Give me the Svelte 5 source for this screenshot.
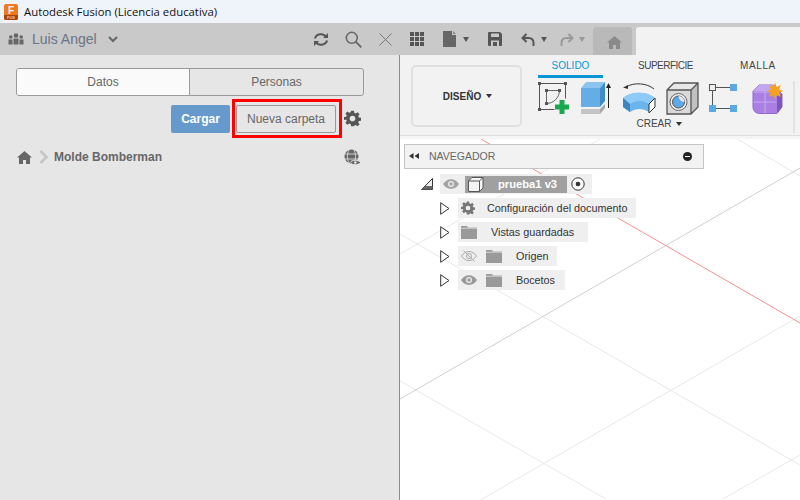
<script>
  const items = [
    { n: 'Configuración del documento', i: 'gear', w: 178, gap: 12 },
    { n: 'Vistas guardadas', i: 'folder', w: 130, gap: 14 },
    { n: 'Origen', i: 'hidden', w: 99, gap: 14 },
    { n: 'Bocetos', i: 'eye', w: 107, gap: 14 }
  ];
</script>

<div class="app">
  <header class="title">
    <svg class="logo" width="16" height="18" viewBox="0 0 16 18"><rect x="1" y="1" width="14" height="16" rx="2" fill="#f0781e"/><path d="M1 12h14v3a2 2 0 0 1-2 2H3a2 2 0 0 1-2-2z" fill="#a8420f"/><text x="8" y="10.5" class="logof">F</text><text x="8" y="15.8" class="logos">FUS</text></svg>
    <span>Autodesk Fusion (Licencia educativa)</span>
  </header>

  <div class="toolbar">
    <div class="user">
      <svg width="16" height="12" viewBox="0 0 16 12" fill="#666"><circle cx="8" cy="2.5" r="2.3"/><circle cx="2.8" cy="4" r="1.8"/><circle cx="13.2" cy="4" r="1.8"/><rect x="5.5" y="5.5" width="5" height="6"/><rect x="0.5" y="6.5" width="4" height="5"/><rect x="11.5" y="6.5" width="4" height="5"/></svg>
      <span class="uname">Luis Angel</span>
      <svg width="10" height="7" viewBox="0 0 10 7" fill="none" stroke="#666" stroke-width="2"><path d="M1 1l4 4 4-4"/></svg>
    </div>
    <div class="tools">
      <svg class="t-sync" width="16" height="15" viewBox="0 0 16 15" fill="none" stroke="#555" stroke-width="2"><path d="M2 6.5a6 5.5 0 0 1 11-1.5M14 8.5a6 5.500 0 0 1-11 1.500"/><path d="M15 1v5h-5zM1 14V9h5z" fill="#555" stroke="none"/></svg>
      <svg class="t-search" width="17" height="17" viewBox="0 0 17 17" fill="none" stroke="#666" stroke-width="1.5"><circle cx="6.800" cy="6.800" r="5.500"/><path d="M10.800 10.800l5.500 5.500" stroke-width="1.800"/></svg>
      <svg class="t-x" width="13" height="13" viewBox="0 0 13 13" fill="none" stroke="#777" stroke-width="1"><path d="M.5 .5l12 12M12.5 .5l-12 12"/></svg>
      <svg class="t-grid" width="14" height="14" viewBox="0 0 14 14" fill="#555"><path d="M0 0h4v4H0zM5 0h4v4H5zM10 0h4v4h-4zM0 5h4v4H0zM5 5h4v4H5zM10 5h4v4h-4zM0 10h4v4H0zM5 10h4v4H5zM10 10h4v4h-4z"/></svg>
      <svg class="t-file" width="13" height="16" viewBox="0 0 13 16"><path d="M0 0h9v4h4v12H0z" fill="#666"/><path d="M10 0l3 3h-3z" fill="#888"/></svg>
      <span class="caret c1"></span>
      <svg class="t-save" width="14" height="14" viewBox="0 0 14 14" fill="#555"><path d="M0 1a1 1 0 0 1 1-1h11l2 2v11a1 1 0 0 1-1 1H1a1 1 0 0 1-1-1z"/><rect x="3" y="1.5" width="8" height="3.500" fill="#c9c9c9"/><path d="M3 14V8.500h8V14h-2V10H5v4z" fill="#c9c9c9"/></svg>
      <svg class="t-undo" width="14" height="13" viewBox="0 0 14 13" fill="none" stroke="#555" stroke-width="2"><path d="M5.500 1L1.500 5l4 4"/><path d="M2 5h6a4.500 4.500 0 0 1 4.500 4.500V13"/></svg>
      <span class="caret c2"></span>
      <svg class="t-redo" width="14" height="13" viewBox="0 0 14 13" fill="none" stroke="#999" stroke-width="2"><path d="M8.500 1l4 4-4 4"/><path d="M12 5H6a4.500 4.500 0 0 0-4.500 4.500V13"/></svg>
      <span class="caret c3"></span>
      <div class="hometab">
        <svg width="15" height="13" viewBox="0 0 15 13" fill="#8a8a8a"><path d="M7.500 0L15 6.500h-2V13H9V9H6v4H2V6.500H0z"/></svg>
      </div>
      <div class="doctab"></div>
    </div>
  </div>

  <div class="main">
    <aside class="left">
      <div class="seg">
        <div class="segb on">Datos</div>
        <div class="segb">Personas</div>
      </div>
      <div class="actions">
        <button class="upload">Cargar</button>
        <div class="redbox"><button class="newf">Nueva carpeta</button></div>
        <svg class="gear" width="17" height="17" viewBox="0 0 24 24" fill="#555"><path fill-rule="evenodd" d="M10 1h4l.6 3.200 1.900.8 2.700-1.900 2.800 2.800-1.900 2.700.8 1.900 3.100.5v4l-3.100.6-.8 1.900 1.900 2.700-2.800 2.800-2.700-1.900-1.900.8L14 23h-4l-.6-3.200-1.900-.8-2.700 1.900-2.800-2.800 1.900-2.700-.8-1.900L0 14v-4l3.100-.5.800-1.900L2 4.900l2.800-2.800L7.500 4l1.900-.8zM12 8a4 4 0 1 0 0 8 4 4 0 0 0 0-8z"/></svg>
      </div>
      <div class="crumb">
        <svg class="chome" width="15" height="13" viewBox="0 0 15 13" fill="#666"><path d="M7.500 0L15 6.500h-2V13H9V9H6v4H2V6.500H0z"/></svg>
        <svg class="sep" width="9" height="14" viewBox="0 0 9 14" fill="none" stroke="#c4c4c4" stroke-width="2.500"><path d="M1.500 1l6 6-6 6"/></svg>
        <b>Molde Bomberman</b>
        <svg class="globe" width="17" height="17" viewBox="0 0 17 17"><circle cx="7.500" cy="7.500" r="7" fill="#666"/><path d="M0.500 5h14M0.500 10h14M5 1c-2 4-2 9 0 13M10 1c2 4 2 9 0 13" fill="none" stroke="#e6e6e6" stroke-width="0.800"/><path d="M6 13.500c2-3 8.500-3 10.500 0-2 3-8.500 3-10.500 0z" fill="#666" stroke="#e6e6e6"/><circle cx="11.300" cy="13.500" r="1.300" fill="#e6e6e6"/></svg>
      </div>
    </aside>

    <section class="right">
      <div class="ribbon">
        <div class="design"><span>DISEÑO</span><i class="caret dark"></i></div>
        <div class="tabsarea">
          <div class="tabs">
            <div class="tab active">SOLIDO</div>
            <div class="tab sup">SUPERFICIE</div>
            <div class="tab malla">MALLA</div>
          </div>
          <div class="icons">
            <svg class="i1" width="32" height="32" viewBox="0 0 32 32">
              <path d="M1.500 1.500h26M1.500 1.500v26M27.500 1.500v15M1.500 27.500h15" fill="none" stroke="#555"/>
              <path d="M8.500 8.500h13M8.500 8.500v13M21.500 8.500c0 7-6 13-13 13" fill="none" stroke="#666"/>
              <g fill="#555"><rect width="3" height="3"/><rect x="26" width="3" height="3"/><rect y="26" width="3" height="3"/><rect x="7" y="7" width="3" height="3"/><rect x="20" y="7" width="3" height="3"/><rect x="7" y="20" width="3" height="3"/></g>
              <path d="M21.500 18h5v4.500H31v5h-4.500V32h-5v-4.500H17v-5h4.500z" fill="#1aa84f"/>
            </svg>
            <svg class="i2" width="31" height="32" viewBox="0 0 31 32">
              <path d="M0 6L5 0h19l-5 6z" fill="#8cc4f0"/>
              <rect y="6" width="19" height="19" fill="#67ade5"/>
              <path d="M19 6l5-6v19l-5 6z" fill="#3c8cc8"/>
              <path d="M0 27h19v5H0z" fill="#c4c4c4"/>
              <path d="M19 27l5-5v4l-5 6z" fill="#a8a8a8"/>
              <path d="M27.500 26V4" stroke="#222"/>
              <path d="M25 6l2.500-5L30 6z" fill="#222"/>
            </svg>
            <svg class="i3" width="33" height="30" viewBox="0 0 33 30">
              <path d="M3 4C11 -1 24 0 31 6" fill="none" stroke="#333"/>
              <path d="M0 4.500l5-2.500v4z" fill="#333"/>
              <path d="M0 15c8-7 24-7 32 0v8l-6 6c-6-4-13-4-19 0l-7-5z" fill="#6cb4ec"/>
              <path d="M0 15c8-7 24-7 32 0l-6 6c-6-4-13-4-19 0z" fill="#8fcbf8"/>
              <path d="M0 15l7 6v8l-7-5z" fill="#3a85c4"/>
              <path d="M26 21l6-6v9l-6 6z" fill="#fff" stroke="#333"/>
            </svg>
            <svg class="i4" width="33" height="33" viewBox="0 0 33 33">
              <path d="M1 8L8 1h24v24l-7 7H1z" fill="#dadada"/>
              <path d="M1 8L8 1h24l-7 7z" fill="#e8e8e8"/>
              <path d="M25 8l7-7v24l-7 7z" fill="#c0c0c0"/>
              <path d="M1 8L8 1h24v24l-7 7H1zM1 8h24v24M25 8l7-7" fill="none" stroke="#555" stroke-width="1.300"/>
              <circle cx="12.500" cy="20" r="8.500" fill="#eee" stroke="#666"/>
              <circle cx="12.500" cy="20" r="6" fill="#5fa9e6" stroke="#555"/>
              <path d="M12.500 14a6 6 0 0 1 6 6c-3 0-6-3-6-6z" fill="#e8e8e8"/>
            </svg>
            <svg class="i5" width="28" height="28" viewBox="0 0 28 28"><rect x=".5" y=".5" width="6" height="6" fill="#eee" stroke="#555"/><rect x="21" y="0" width="7" height="7" fill="#5aa9e2"/><rect x="0" y="21" width="7" height="7" fill="#5aa9e2"/><rect x="21" y="21" width="7" height="7" fill="#5aa9e2"/><path d="M7 3.500h14M3.500 7v14M7 24.500h14" stroke="#555"/></svg>
            <svg class="i6" width="32" height="32" viewBox="0 0 32 32">
              <path d="M7 3h14l9 9v13l-5 6.500H8C4 31.500 1 29 1 25V9z" fill="#a97fe3" stroke="#8f66d2"/>
              <path d="M1 9L7 3h14l4 6z" fill="#c2a6f0"/>
              <path d="M25 14l5-2v13l-5 6z" fill="#7f55bf"/>
              <path d="M1.500 20h23M13 10v21M1.500 10h23" stroke="#c9adf0" fill="none"/>
              <path d="M23 .5l1.600 4.600 4.400-2-2 4.400 4.500 1.500-4.500 1.600 2 4.400-4.400-2-1.600 4.500-1.600-4.500-4.400 2 2-4.400-4.500-1.600 4.500-1.500-2-4.400 4.400 2z" fill="#f5a21b"/>
            </svg>
          </div>
          <div class="crear">CREAR<i class="caret dark"></i></div>
        </div>
        <div class="rsep"></div>
      </div>
      <div class="shade"></div>

      <div class="canvas">
        <svg class="lines" width="400" height="361" viewBox="400 139 400 361" fill="none">
          <path d="M400 254L600 139M400 234L800 465M737 139L800 176M400 381L606 499M800 316L470 506M800 455L723 499" stroke="#e8e8e8"/>
          <path d="M400 399L800 168" stroke="#cfcfcf"/>
          <path d="M481 139L800 323" stroke="#f59090"/>
        </svg>
        <div class="nav">
          <div class="navhead">
            <svg width="10" height="6" viewBox="0 0 10 6" fill="#333"><path d="M4.500 0v6L0 3zM10 0v6L5.500 3z"/></svg>
            <span>NAVEGADOR</span>
            <i class="minus"></i>
          </div>
          <div class="tree">
            <div class="row root">
              <svg class="tri" width="12" height="12" viewBox="0 0 12 12"><path d="M.5 11.500L11.500 .5v11z" fill="#eee" stroke="#333"/><path d="M4 8h7.500v3.500H.5z" fill="#666"/></svg>
              <div class="chip rootchip">
                <svg class="eye" width="16" height="10" viewBox="0 0 16 10"><path d="M0 5c4-6.500 12-6.500 16 0-4 6.500-12 6.500-16 0z" fill="#a3a3a3"/><circle cx="8" cy="5" r="3" fill="#efefef"/><circle cx="8" cy="5" r="1.800" fill="#a3a3a3"/></svg>
                <div class="docname">
                  <svg width="16" height="15" viewBox="0 0 16 15"><path d="M.5 4L4 .5h11V11l-3.500 3.500H.5z" fill="#f4f4f4" stroke="#555"/><path d="M.5 4H11.500v10.500M11.500 4L15 .5" fill="none" stroke="#555"/></svg>
                  <b>prueba1 v3</b>
                </div>
                <svg class="radio" width="14" height="14" viewBox="0 0 14 14"><circle cx="7" cy="7" r="6.200" fill="#fff" stroke="#333"/><circle cx="7" cy="7" r="2.300" fill="#333"/></svg>
              </div>
            </div>
            {#each items as it}
              <div class="row child">
                <svg class="tri" width="10" height="13" viewBox="0 0 10 13"><path d="M.7 .7L9 6.500.7 12.300z" fill="#fff" stroke="#333"/></svg>
                <div class="chip" style="width:{it.w}px">
                  {#if it.i === 'gear'}
                    <svg width="14" height="14" viewBox="0 0 24 24" fill="#777"><path fill-rule="evenodd" d="M10 1h4l.6 3.200 1.900.8 2.700-1.900 2.800 2.800-1.900 2.700.8 1.900 3.100.5v4l-3.100.6-.8 1.900 1.900 2.700-2.800 2.800-2.700-1.900-1.900.8L14 23h-4l-.6-3.200-1.900-.8-2.700 1.900-2.800-2.800 1.900-2.700-.8-1.900L0 14v-4l3.100-.5.800-1.900L2 4.900l2.800-2.800L7.500 4l1.900-.8zM12 8a4 4 0 1 0 0 8 4 4 0 0 0 0-8z"/></svg>
                  {:else}
                    {#if it.i === 'eye'}
                      <svg class="e2" width="16" height="10" viewBox="0 0 16 10"><path d="M0 5c4-6.500 12-6.500 16 0-4 6.500-12 6.500-16 0z" fill="#999"/><circle cx="8" cy="5" r="3" fill="#efefef"/><circle cx="8" cy="5" r="1.800" fill="#999"/></svg>
                    {:else if it.i === 'hidden'}
                      <svg class="e2" width="16" height="12" viewBox="0 0 16 12" fill="none" stroke="#aaa"><path d="M.5 6c4-6 11-6 15 0-4 6-11 6-15 0z"/><circle cx="8" cy="6" r="2.500"/><path d="M2.500 .5l11 11"/></svg>
                    {/if}
                    <svg class="folder" width="16" height="13" viewBox="0 0 16 13" fill="#9a9a9a"><path d="M0 0h6l1 1.500h9V13H0z"/><path d="M0 2.200h16" stroke="#efefef" stroke-width=".7"/></svg>
                  {/if}
                  <span style="margin-left:{it.gap}px">{it.n}</span>
                </div>
              </div>
            {/each}
          </div>
        </div>
      </div>
    </section>
  </div>
</div>

<style>
  :global(body) { margin: 0; }
  .app { width: 800px; height: 500px; display: flex; flex-direction: column; overflow: hidden; font-family: "Liberation Sans", Arial, sans-serif; background: #fff; }
  .title { height: 23px; flex: none; background: #eff4fb; display: flex; align-items: center; gap: 5px; padding-left: 3px; font: 11.35px "Open Sans", "Noto Sans", sans-serif; color: #111; }
  .logo { flex: none; }
  .logof { fill: #fff; font: bold 10px "Liberation Sans", sans-serif; text-anchor: middle; }
  .logos { fill: #f3c9a8; font: bold 4px "Liberation Sans", sans-serif; text-anchor: middle; }
  .toolbar { height: 32px; flex: none; background: #c9c9c9; display: flex; align-items: center; position: relative; }
  .user { display: flex; align-items: center; margin-left: 8px; width: 304px; }
  .uname { font-size: 14px; color: #6a7585; margin-left: 8px; margin-right: 11px; }
  .tools { display: flex; align-items: center; height: 100%; flex: 1; }
  .t-sync { margin-left: 1px; }
  .t-search { margin-left: 16px; }
  .t-x { margin-left: 17px; }
  .t-grid { margin-left: 18px; }
  .t-file { margin-left: 19px; }
  .caret { display: inline-block; width: 0; height: 0; border-left: 3.5px solid transparent; border-right: 3.5px solid transparent; border-top: 5px solid #555; }
  .c1 { margin-left: 7px; }
  .t-save { margin-left: 19px; }
  .t-undo { margin-left: 19px; }
  .c2 { margin-left: 6px; }
  .t-redo { margin-left: 13px; }
  .c3 { margin-left: 5px; border-top-color: #999; }
  .hometab { margin-left: 8px; width: 39px; height: 28px; align-self: flex-end; background: #b9b9b9; border-radius: 3px 3px 0 0; display: flex; align-items: center; justify-content: center; padding: 3px 0 0 3px; box-sizing: border-box; }
  .doctab { margin-left: 4px; flex: 1; height: 28px; align-self: flex-end; background: #f2f2f2; border-radius: 3px 0 0 0; }
  .main { flex: 1; display: flex; min-height: 0; }
  .left { width: 399px; flex: none; box-sizing: border-box; background: #e6e6e6; padding: 13px 36px 0 16px; }
  .seg { display: flex; height: 28px; box-sizing: border-box; border: 1px solid #9a9a9a; border-radius: 3px; overflow: hidden; width: 348px; }
  .segb { flex: 1; display: flex; align-items: center; justify-content: center; font-size: 12px; color: #666; }
  .segb.on { background: #fafafa; flex: 0 0 172px; border-right: 1px solid #9a9a9a; }
  .actions { display: flex; align-items: center; margin-top: 3px; justify-content: flex-end; width: 345px; }
  .upload { width: 59px; height: 28px; border: 0; border-radius: 2px; background: #6699cc; color: #fff; font: bold 12px "Liberation Sans", sans-serif; padding: 0; }
  .redbox { border: 3px solid #f00; padding: 3px 3px 2px 1px; margin-left: 2px; display: flex; }
  .newf { width: 100px; height: 28px; box-sizing: border-box; border: 1px solid #999; border-radius: 2px; background: #e6e6e6; color: #666; font: 12px "Liberation Sans", sans-serif; padding: 0; }
  .gear { margin-left: 2px; }
  .crumb { display: flex; align-items: center; margin-top: 7px; height: 24px; width: 345px; font-size: 12px; color: #666; }
  .chome { margin-left: 1px; }
  .sep { margin-left: 7px; margin-right: 6px; }
  .crumb b { flex: 1; }
  .right { flex: 1; min-width: 0; display: flex; flex-direction: column; border-left: 1px solid #8c8c8c; }
  .ribbon { height: 81px; flex: none; box-sizing: border-box; background: #f2f2f2; border-bottom: 1px solid #dedede; display: flex; }
  .shade { height: 3px; flex: none; background: #f5f5f5; }
  .design { width: 111px; height: 62px; box-sizing: border-box; margin: 10px 0 0 11px; padding-left: 2px; border: 2px solid #e0e0e0; border-radius: 5px; display: flex; align-items: center; justify-content: center; gap: 5px; font: bold 10px "Liberation Sans", sans-serif; color: #333; }
  .caret.dark { border-top-color: #333; border-left-width: 3px; border-right-width: 3px; border-top-width: 4px; }
  .tabsarea { margin-left: 16px; width: 242px; flex: none; }
  .tabs { display: flex; height: 23px; font-size: 10px; color: #444; }
  .tab { padding-top: 4px; line-height: 14px; white-space: nowrap; }
  .tab.active { width: 65px; flex: none; text-align: center; color: #0696d7; box-sizing: border-box; height: 23px; border-bottom: 3px solid #0696d7; }
  .sup { margin-left: 35px; letter-spacing: -0.5px; }
  .malla { margin-left: 47px; letter-spacing: 0.6px; }
  .icons { display: flex; align-items: flex-start; margin-top: 4px; height: 33px; width: 254px; }
  .icons svg { flex: none; }
  .i2 { margin-left: 11px; }
  .i3 { margin-left: 11px; margin-top: 1px; }
  .i4 { margin-left: 10px; }
  .i5 { margin-left: 10px; margin-top: 2px; }
  .i6 { margin-left: 15px; }
  .crear { display: flex; align-items: center; justify-content: center; gap: 4px; font-size: 10px; color: #444; margin-top: 3px; width: 242px; }
  .rsep { margin: 26px 0 0 13px; width: 2px; height: 52px; background: #e2e2e2; }
  .canvas { flex: 1; position: relative; background: #fff; overflow: hidden; }
  .lines { position: absolute; left: 0; top: 0; }
  .nav { position: relative; padding: 5px 0 0 4px; }
  .navhead { width: 300px; height: 25px; box-sizing: border-box; border: 1px solid #c4c4c4; background: #f2f2f2; display: flex; align-items: center; padding: 0 11px 1px 4px; font-size: 10.5px; color: #666; }
  .navhead span { flex: 1; margin-left: 10px; }
  .minus { width: 9px; height: 9px; border-radius: 50%; background: #222; position: relative; display: block; }
  .minus::after { content: ""; position: absolute; left: 2px; right: 2px; top: 4px; height: 1px; background: #fff; }
  .tree { margin-top: 3px; display: flex; flex-direction: column; }
  .row { display: flex; align-items: center; height: 24px; }
  .root { padding-left: 17px; }
  .child { padding-left: 36px; }
  .child .tri { margin-right: 8px; }
  .chip { height: 20px; background: #efefef; display: flex; align-items: center; box-sizing: border-box; padding-left: 3px; font-size: 10px; color: #333; }
  .chip svg { flex: none; }
  .rootchip { margin-left: 7px; width: 152px; padding-left: 3px; }
  .eye { margin-right: 6px; }
  .docname { display: flex; align-items: center; width: 102px; height: 17px; background: #a0a0a0; color: #fff; padding-left: 3px; box-sizing: border-box; }
  .docname b { margin-left: 14px; font-size: 11.2px; white-space: nowrap; }
  .radio { margin-left: 4px; }
  .e2 { margin-right: 9px; }
  .row .chip span { white-space: nowrap; font-size: 10.8px; }
  .tri { flex: none; }
</style>
